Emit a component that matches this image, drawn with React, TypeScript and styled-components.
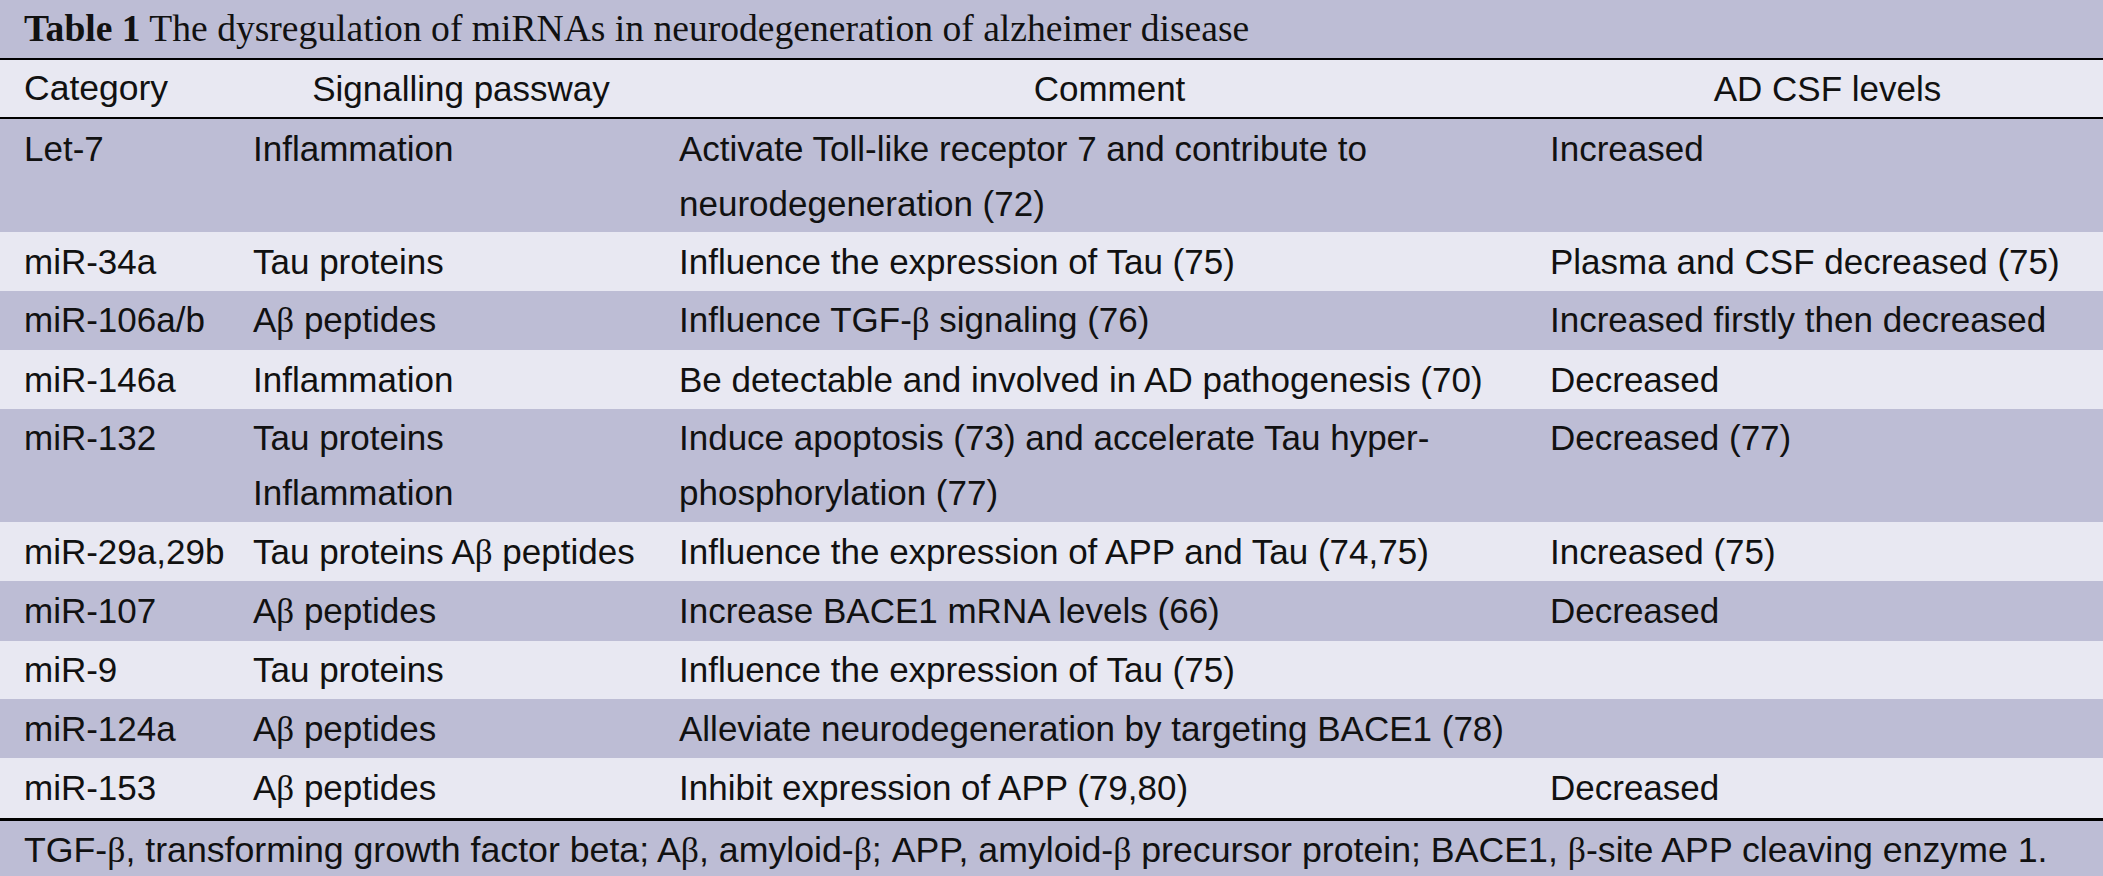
import React from "react"
import styled, { createGlobalStyle } from "styled-components"

const GlobalStyle = createGlobalStyle`
	html, body {
		margin: 0;
		padding: 0;
		background: #e8e8f2;
	}
	body {
		font-family: "Liberation Sans", Arial, sans-serif;
		color: #111;
	}
`

const DARK = "#bdbdd5"
const LIGHT = "#e8e8f2"

const TableWrap = styled.div`
	width: 2103px;
	background: ${DARK};
`

const Caption = styled.div`
	height: 58px;
	line-height: 58px;
	padding-left: 24px;
	font-family: "Liberation Serif", "Times New Roman", serif;
	font-size: 37.6px;
	background: ${DARK};
	white-space: nowrap;

	b {
		font-weight: bold;
	}
`

const Table = styled.table`
	width: 100%;
	border-collapse: collapse;
	table-layout: fixed;
	font-size: 35px;
`

const HeadRow = styled.tr`
	background: ${LIGHT};
	border-top: 2px solid #000;
	border-bottom: 2px solid #000;
`

const HeadCell = styled.th<{ $align?: string }>`
	font-weight: normal;
	height: 57px;
	line-height: 57px;
	padding: 0 0 0 14px;
	text-align: ${(p) => p.$align || "center"};
	white-space: nowrap;

	&:first-child {
		padding-left: 24px;
		font-size: 35.5px;
	}
`

const Row = styled.tr<{ $dark: boolean }>`
	background: ${(p) => (p.$dark ? DARK : LIGHT)};
`

const Cell = styled.td`
	padding: 1.7px 0 1.7px 12px;
	line-height: 55px;
	vertical-align: top;
	white-space: nowrap;

	&:first-child {
		padding-left: 24px;
	}
`

const Footnote = styled.div`
	border-top: 3px solid #000;
	height: 58px;
	line-height: 58px;
	padding-left: 24px;
	font-size: 35.7px;
	background: ${DARK};
	white-space: nowrap;
`

const Beta = styled.span`
	font-family: "Liberation Serif", "Times New Roman", serif;
`

const B = () => <Beta>β</Beta>

type Entry = {
	category: string
	pathway: React.ReactNode
	comment: React.ReactNode
	level: React.ReactNode
}

const rows: Entry[] = [
	{
		category: "Let-7",
		pathway: "Inflammation",
		comment: (
			<>
				Activate Toll-like receptor 7 and contribute to
				<br />
				neurodegeneration (72)
			</>
		),
		level: "Increased",
	},
	{
		category: "miR-34a",
		pathway: "Tau proteins",
		comment: "Influence the expression of Tau (75)",
		level: "Plasma and CSF decreased (75)",
	},
	{
		category: "miR-106a/b",
		pathway: (
			<>
				A<B /> peptides
			</>
		),
		comment: (
			<>
				Influence TGF-<B /> signaling (76)
			</>
		),
		level: "Increased firstly then decreased",
	},
	{
		category: "miR-146a",
		pathway: "Inflammation",
		comment: "Be detectable and involved in AD pathogenesis (70)",
		level: "Decreased",
	},
	{
		category: "miR-132",
		pathway: (
			<>
				Tau proteins
				<br />
				Inflammation
			</>
		),
		comment: (
			<>
				Induce apoptosis (73) and accelerate Tau hyper-
				<br />
				phosphorylation (77)
			</>
		),
		level: "Decreased (77)",
	},
	{
		category: "miR-29a,29b",
		pathway: (
			<>
				Tau proteins A<B /> peptides
			</>
		),
		comment: "Influence the expression of APP and Tau (74,75)",
		level: "Increased (75)",
	},
	{
		category: "miR-107",
		pathway: (
			<>
				A<B /> peptides
			</>
		),
		comment: "Increase BACE1 mRNA levels (66)",
		level: "Decreased",
	},
	{
		category: "miR-9",
		pathway: "Tau proteins",
		comment: "Influence the expression of Tau (75)",
		level: "",
	},
	{
		category: "miR-124a",
		pathway: (
			<>
				A<B /> peptides
			</>
		),
		comment: "Alleviate neurodegeneration by targeting BACE1 (78)",
		level: "",
	},
	{
		category: "miR-153",
		pathway: (
			<>
				A<B /> peptides
			</>
		),
		comment: "Inhibit expression of APP (79,80)",
		level: "Decreased",
	},
]

const App = () => {
	return (
		<>
			<GlobalStyle />
			<TableWrap>
				<Caption>
					<b>Table 1</b> The dysregulation of miRNAs in neurodegeneration of alzheimer disease
				</Caption>
				<Table>
					<colgroup>
						<col style={{ width: 241 }} />
						<col style={{ width: 426 }} />
						<col style={{ width: 871 }} />
						<col />
					</colgroup>
					<thead>
						<HeadRow>
							<HeadCell $align="left">Category</HeadCell>
							<HeadCell>Signalling passway</HeadCell>
							<HeadCell>Comment</HeadCell>
							<HeadCell>AD CSF levels</HeadCell>
						</HeadRow>
					</thead>
					<tbody>
						{rows.map((r, i) => (
							<Row key={r.category} $dark={i % 2 === 0}>
								<Cell>{r.category}</Cell>
								<Cell>{r.pathway}</Cell>
								<Cell>{r.comment}</Cell>
								<Cell>{r.level}</Cell>
							</Row>
						))}
					</tbody>
				</Table>
				<Footnote>
					TGF-<B />, transforming growth factor beta; A<B />, amyloid-<B />; APP, amyloid-<B /> precursor
					protein; BACE1, <B />-site APP cleaving enzyme 1.
				</Footnote>
			</TableWrap>
		</>
	)
}

export default App
